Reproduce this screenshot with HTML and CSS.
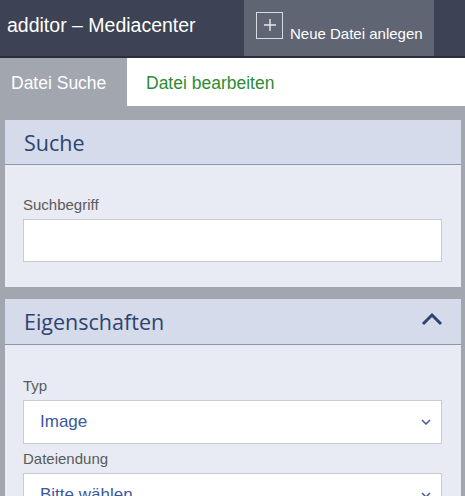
FILE: index.html
```html
<!DOCTYPE html>
<html lang="de">

<head>
    <meta charset="UTF-8">
    <title>additor – Mediacenter</title>
    <link rel="stylesheet" href="styles.css">
</head>

<body>

    <div class="topbar">
        <div class="app-title">additor – Mediacenter</div>
        <div class="new-file">
            <span class="plus-box">
                <svg width="24" height="24" viewBox="0 0 24 24">
                    <path d="M12 6v12M6 12h12" stroke="#e8eaee" stroke-width="1.4" fill="none" />
                </svg>
            </span>
            <span class="new-file-text">Neue Datei anlegen</span>
        </div>
    </div>

    <div class="tabs">
        <div class="tab active">Datei Suche</div>
        <div class="tab">Datei bearbeiten</div>
    </div>

    <div class="content">
        <div class="panel">
            <div class="panel-head">
                <span class="panel-title">Suche</span>
            </div>
            <div class="panel-body panel-body-search">
                <label class="field-label">Suchbegriff</label>
                <input class="text-input" type="text">
            </div>
        </div>

        <div class="panel">
            <div class="panel-head panel-head-tall">
                <span class="panel-title">Eigenschaften</span>
                <svg class="collapse" width="22" height="14" viewBox="0 0 22 14">
                    <path d="M2 12L11 3l9 9" stroke="#2d4470" stroke-width="3" fill="none" />
                </svg>
            </div>
            <div class="panel-body panel-body-props">
                <label class="field-label">Typ</label>
                <div class="select">
                    <span>Image</span>
                    <svg width="10" height="6" viewBox="0 0 10 6">
                        <path d="M1 1l4 4 4-4" stroke="#46589a" stroke-width="1.5" fill="none" />
                    </svg>
                </div>
                <label class="field-label">Dateiendung</label>
                <div class="select">
                    <span>Bitte wählen</span>
                    <svg width="10" height="6" viewBox="0 0 10 6">
                        <path d="M1 1l4 4 4-4" stroke="#46589a" stroke-width="1.5" fill="none" />
                    </svg>
                </div>
            </div>
        </div>
    </div>

</body>

</html>
```

FILE: styles.css
```css
body {
    margin: 0;
    background-color: #A1A6AF;
    font-family: "Liberation Sans", Arial, sans-serif;
    overflow: hidden;
}

.topbar {
    display: flex;
    height: 56px;
    background-color: #3D4354;
    border-bottom: 2px solid #2A2F3D;
}

.app-title {
    width: 244px;
    padding-left: 7px;
    box-sizing: border-box;
    color: #FFFFFF;
    font-size: 19.5px;
    line-height: 50px;
}

.new-file {
    display: flex;
    align-items: center;
    width: 190px;
    padding-left: 12px;
    box-sizing: border-box;
    background-color: #5F6572;
}

.plus-box {
    display: flex;
    width: 25px;
    height: 25px;
    border: 1px solid #D8DBE0;
    margin-top: -6px;
    align-items: center;
    justify-content: center;
}

.new-file-text {
    color: #FFFFFF;
    font-size: 15px;
    margin-left: 7px;
    margin-top: 10px;
}

.tabs {
    display: flex;
    height: 48px;
    background-color: #FFFFFF;
}

.tab {
    padding: 0 19px 0 19px;
    color: #2E8B34;
    font-size: 17.5px;
    line-height: 50px;
}

.tab.active {
    width: 127px;
    box-sizing: border-box;
    padding-left: 11px;
    background-color: #A1A6AF;
    color: #FFFFFF;
}

.content {
    padding: 14px 4px 0 5px;
}

.panel {
    margin-bottom: 12px;
}

.panel-head {
    display: flex;
    align-items: center;
    justify-content: space-between;
    height: 44px;
    padding: 0 19px;
    background-color: #D5DBEA;
    border-bottom: 1px solid #8C95AA;
}

.panel-head-tall {
    height: 45px;
}

.panel-title {
    color: #2D4470;
    font-family: "Open Sans", "Liberation Sans", sans-serif;
    font-size: 21.5px;
}

.collapse {
    margin-right: -1px;
    margin-top: -6px;
}

.panel-body {
    display: flex;
    flex-direction: column;
    padding: 30px 19px 20px 18px;
    background-color: #E8EBF3;
}

.panel-body-search {
    padding-top: 31px;
    padding-bottom: 25px;
}

.panel-body-props {
    padding-top: 32px;
}

.field-label {
    color: #5A5A5A;
    font-size: 15px;
    margin-bottom: 6px;
}

.text-input {
    height: 43px;
    box-sizing: border-box;
    border: 1px solid #C9CBD0;
    background-color: #FFFFFF;
    margin: 0;
}

.select {
    display: flex;
    align-items: center;
    justify-content: space-between;
    height: 42px;
    padding: 0 10px 0 16px;
    background-color: #FFFFFF;
    border: 1px solid #C9CBD0;
    color: #3A57A0;
    font-size: 17px;
    margin-bottom: 6px;
}
```
